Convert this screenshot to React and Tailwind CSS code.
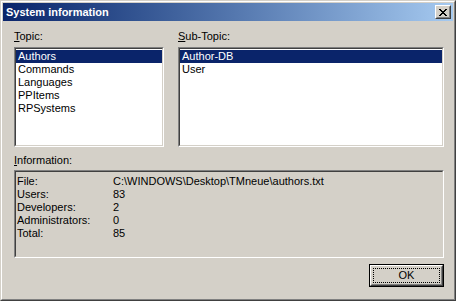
export default function App() {
  const font = { fontFamily: '"Liberation Sans", Arial, sans-serif' };
  return (
    <div style={font} className="w-[456px] h-[301px] bg-[#d4d0c8] text-[11px] leading-[13px] text-black">
      <div className="w-full h-full border border-t-[#d4d0c8] border-l-[#d4d0c8] border-r-[#404040] border-b-[#404040]">
        <div className="w-full h-full border border-t-white border-l-white border-r-[#808080] border-b-[#808080] p-px flex flex-col">
          {/* Title bar */}
          <div className="h-[18px] flex items-center justify-between bg-gradient-to-r from-[#0a246a] to-[#a6caf0] pl-[3px] pr-[2px]">
            <span className="text-white font-bold text-[11px]">System information</span>
            <div className="w-[16px] h-[14px] bg-[#d4d0c8] border border-t-white border-l-white border-r-[#404040] border-b-[#404040]">
              <div className="w-full h-full border border-t-[#d4d0c8] border-l-[#d4d0c8] border-r-[#808080] border-b-[#808080] flex items-center justify-center">
                <svg width="8" height="7" viewBox="0 0 8 7" shapeRendering="crispEdges">
                  <path d="M0 0h2v1h-2zM6 0h2v1h-2zM1 1h2v1h-2zM5 1h2v1h-2zM2 2h4v1h-4zM3 3h2v1h-2zM2 4h4v1h-4zM1 5h2v1h-2zM5 5h2v1h-2zM0 6h2v1h-2zM6 6h2v1h-2z" fill="#000" />
                </svg>
              </div>
            </div>
          </div>
          {/* Content */}
          <div className="flex-1 flex flex-col pl-[11px] pr-[9px] pt-[9px]">
            <div className="flex gap-[14px]">
              <div className="w-[150px] flex flex-col">
                <div className="h-[17px]"><span className="underline">T</span>opic:</div>
                <ListBox items={["Authors", "Commands", "Languages", "PPItems", "RPSystems"]} />
              </div>
              <div className="flex-1 flex flex-col">
                <div className="h-[17px]"><span className="underline">S</span>ub-Topic:</div>
                <ListBox items={["Author-DB", "User"]} />
              </div>
            </div>
            <div className="mt-[7px] h-[16px]"><span className="underline">I</span>nformation:</div>
            <div className="h-[88px] border border-t-[#808080] border-l-[#808080] border-r-white border-b-white">
              <div className="w-full h-full border border-t-[#404040] border-l-[#404040] border-r-[#d4d0c8] border-b-[#d4d0c8] pt-[3px] pl-[1px]">
                {[
                  ["File:", "C:\\WINDOWS\\Desktop\\TMneue\\authors.txt"],
                  ["Users:", "83"],
                  ["Developers:", "2"],
                  ["Administrators:", "0"],
                  ["Total:", "85"],
                ].map(([k, v]) => (
                  <div key={k} className="flex h-[13px]">
                    <span className="w-[96px]">{k}</span>
                    <span>{v}</span>
                  </div>
                ))}
              </div>
            </div>
            <div className="flex justify-end mt-[6px]">
              <div className="w-[75px] h-[23px] border border-black">
                <div className="w-full h-full border border-t-white border-l-white border-r-[#404040] border-b-[#404040]">
                  <div className="w-full h-full border border-t-[#d4d0c8] border-l-[#d4d0c8] border-r-[#808080] border-b-[#808080] p-px">
                    <div className="w-full h-full border border-dotted border-black flex items-center justify-center">
                      OK
                    </div>
                  </div>
                </div>
              </div>
            </div>
          </div>
        </div>
      </div>
    </div>
  );
}

function ListBox({ items }) {
  return (
    <div className="h-[100px] border border-t-[#808080] border-l-[#808080] border-r-white border-b-white">
      <div className="w-full h-full bg-white border border-t-[#404040] border-l-[#404040] border-r-[#d4d0c8] border-b-[#d4d0c8] pt-[1px]">
        {items.map((it, i) => (
          <div key={it} className={"h-[13px] pl-[2px] " + (i === 0 ? "bg-[#0a246a] text-white" : "")}>
            {it}
          </div>
        ))}
      </div>
    </div>
  );
}
